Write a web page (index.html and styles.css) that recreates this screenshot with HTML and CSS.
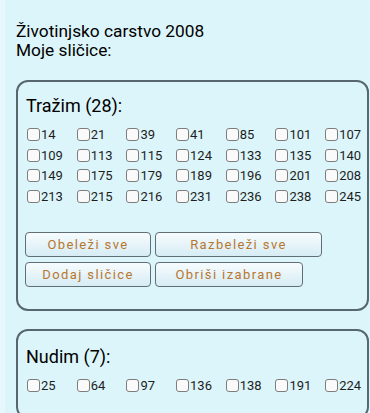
FILE: index.html
```html
<!DOCTYPE html>
<html>
<head>
<meta charset="utf-8">
<link rel="stylesheet" href="styles.css">
</head>
<body>
<div class="page">
  <h1 class="title"><span class="title-line">Životinjsko carstvo 2008</span><span class="title-line">Moje sličice:</span></h1>

  <section class="box">
    <h2 class="box-title">Tražim (28):</h2>
    <div class="grid">
      <label class="item"><input type="checkbox"><span>14</span></label>
      <label class="item"><input type="checkbox"><span>21</span></label>
      <label class="item"><input type="checkbox"><span>39</span></label>
      <label class="item"><input type="checkbox"><span>41</span></label>
      <label class="item"><input type="checkbox"><span>85</span></label>
      <label class="item"><input type="checkbox"><span>101</span></label>
      <label class="item"><input type="checkbox"><span>107</span></label>
      <label class="item"><input type="checkbox"><span>109</span></label>
      <label class="item"><input type="checkbox"><span>113</span></label>
      <label class="item"><input type="checkbox"><span>115</span></label>
      <label class="item"><input type="checkbox"><span>124</span></label>
      <label class="item"><input type="checkbox"><span>133</span></label>
      <label class="item"><input type="checkbox"><span>135</span></label>
      <label class="item"><input type="checkbox"><span>140</span></label>
      <label class="item"><input type="checkbox"><span>149</span></label>
      <label class="item"><input type="checkbox"><span>175</span></label>
      <label class="item"><input type="checkbox"><span>179</span></label>
      <label class="item"><input type="checkbox"><span>189</span></label>
      <label class="item"><input type="checkbox"><span>196</span></label>
      <label class="item"><input type="checkbox"><span>201</span></label>
      <label class="item"><input type="checkbox"><span>208</span></label>
      <label class="item"><input type="checkbox"><span>213</span></label>
      <label class="item"><input type="checkbox"><span>215</span></label>
      <label class="item"><input type="checkbox"><span>216</span></label>
      <label class="item"><input type="checkbox"><span>231</span></label>
      <label class="item"><input type="checkbox"><span>236</span></label>
      <label class="item"><input type="checkbox"><span>238</span></label>
      <label class="item"><input type="checkbox"><span>245</span></label>
    </div>
    <div class="buttons">
      <div class="btn-row">
        <button class="btn btn-a">Obeleži sve</button>
        <button class="btn btn-b">Razbeleži sve</button>
      </div>
      <div class="btn-row">
        <button class="btn btn-a">Dodaj sličice</button>
        <button class="btn btn-c">Obriši izabrane</button>
      </div>
    </div>
  </section>

  <section class="box box-second">
    <span class="stray">:</span>
    <h2 class="box-title">Nudim (7):</h2>
    <div class="grid">
      <label class="item"><input type="checkbox"><span>25</span></label>
      <label class="item"><input type="checkbox"><span>64</span></label>
      <label class="item"><input type="checkbox"><span>97</span></label>
      <label class="item"><input type="checkbox"><span>136</span></label>
      <label class="item"><input type="checkbox"><span>138</span></label>
      <label class="item"><input type="checkbox"><span>191</span></label>
      <label class="item"><input type="checkbox"><span>224</span></label>
    </div>
  </section>
</div>
</body>
</html>
```

FILE: styles.css
```css
html, body {
  margin: 0;
  padding: 0;
}

body {
  background: #dcf5fa;
  border-left: 5px solid #e6f8fc;
  font-family: Roboto, "Liberation Sans", sans-serif;
  color: #000;
  overflow: hidden;
  height: 413px;
}

.page {
  padding: 21.5px 0 0 11px;
}

.title {
  margin: 0;
  font-size: 17.3px;
  line-height: 19px;
  font-weight: 400;
  color: #000;
}

.title-line {
  display: block;
}

.box {
  position: relative;
  margin: 20.5px 1px 0 0;
  border: 2px solid #56676d;
  border-radius: 12px;
  padding: 13px 0 22px 9px;
}

.box-second {
  margin-top: 18px;
  padding-top: 15px;
}

.box-title {
  margin: 0 0 7px -1px;
  font-size: 18px;
  line-height: 22px;
  font-weight: 400;
  color: #000;
}

.grid {
  display: grid;
  grid-template-columns: repeat(7, 49.7px);
  grid-auto-rows: 20.7px;
}

.item {
  display: flex;
  align-items: center;
  font-size: 13px;
  color: #1e1e1e;
}

.item input {
  appearance: none;
  -webkit-appearance: none;
  margin: 0 1px 0 0;
  width: 13px;
  height: 13px;
  border: 1px solid #7d7d7d;
  border-radius: 3px;
  background: #fafafa;
  box-sizing: border-box;
}

.buttons {
  display: flex;
  flex-direction: column;
  gap: 5px;
  margin-top: 25px;
  margin-left: -2px;
}

.btn-row {
  display: flex;
  gap: 4px;
}

.btn {
  height: 25px;
  padding: 0;
  border: 1.5px solid #5f6f75;
  border-radius: 4px;
  background: linear-gradient(#f7fcfe, #d6ecf4);
  font-family: Roboto, "Liberation Sans", sans-serif;
  font-size: 13px;
  font-weight: 400;
  letter-spacing: 1.4px;
  color: #b8772f;
}

.btn-a { width: 126px; }
.btn-b { width: 167px; }
.btn-c { width: 148px; }

.stray {
  position: absolute;
  left: -16px;
  top: 6px;
  font-size: 13px;
  color: #555;
}
```
